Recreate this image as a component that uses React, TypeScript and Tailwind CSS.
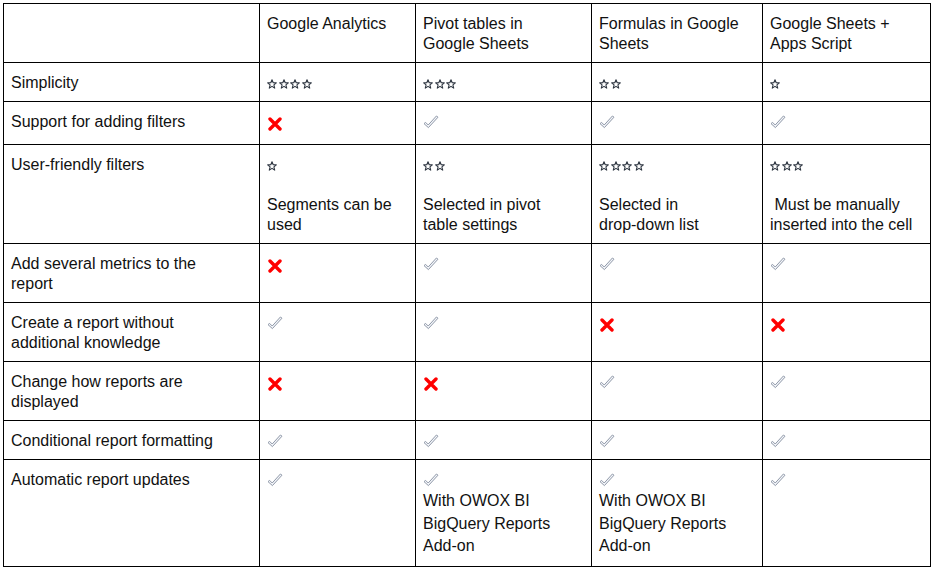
import type { ReactNode } from "react";

function Star() {
    return (
        <svg width="10" height="10" viewBox="0 0 10 10" className="mr-[1.7px] inline-block align-[-1px]">
            <path
                d="M5 0.8 L6.2 3.7 L9.3 3.9 L6.9 5.9 L7.7 9.1 L5 7.4 L2.3 9.1 L3.1 5.9 L0.7 3.9 L3.8 3.7 Z"
                fill="#fff"
                stroke="#2d3540"
                strokeWidth="1.1"
                strokeLinejoin="round"
            />
        </svg>
    );
}

function Stars({ n }: { n: number }) {
    return (
        <span className="leading-[20px]">
            {Array.from({ length: n }, (_, i) => (
                <Star key={i} />
            ))}
        </span>
    );
}

function Check() {
    return (
        <svg width="16" height="14" viewBox="0 0 16 14" className="inline-block align-[-2px]">
            <path
                d="M1 8.6 L2.6 7.4 L5.2 10 L13.4 1 L15 2.2 L5.4 12.6 Z"
                fill="#f4f6fa"
                stroke="#8f98a8"
                strokeWidth="1"
                strokeLinejoin="round"
            />
        </svg>
    );
}

function Cross() {
    return (
        <span className="inline-block leading-[24px]">
            <svg width="16" height="14" viewBox="0 0 16 14" className="inline-block align-[-2px]">
                <path d="M3 2 L13 12 M13 2 L3 12" stroke="#ff0000" strokeWidth="3.4" strokeLinecap="round" />
            </svg>
        </span>
    );
}

type Cell = ReactNode;

const header = ["", "Google Analytics", "Pivot tables in Google Sheets", "Formulas in Google Sheets", "Google Sheets + Apps Script"];

const addOn = (
    <>
        <div className="leading-[20px]">
            <Check />
        </div>
        <div className="leading-[22.5px]">
            With OWOX BI BigQuery Reports <span className="whitespace-nowrap">Add-on</span>
        </div>
    </>
);

const rows: Cell[][] = [
    ["Simplicity", <Stars n={4} />, <Stars n={3} />, <Stars n={2} />, <Stars n={1} />],
    ["Support for adding filters", <Cross />, <Check />, <Check />, <Check />],
    [
        "User-friendly filters",
        <>
            <Stars n={1} />
            <div className="h-5" />
            <div>Segments can be used</div>
        </>,
        <>
            <Stars n={2} />
            <div className="h-5" />
            <div>Selected in pivot table settings</div>
        </>,
        <>
            <Stars n={4} />
            <div className="h-5" />
            <div>
                Selected in <span className="whitespace-nowrap">drop-down</span> list
            </div>
        </>,
        <>
            <Stars n={3} />
            <div className="h-5" />
            <div className="whitespace-pre-wrap">{" Must be manually inserted into the cell"}</div>
        </>,
    ],
    ["Add several metrics to the report", <Cross />, <Check />, <Check />, <Check />],
    ["Create a report without additional knowledge", <Check />, <Check />, <Cross />, <Cross />],
    ["Change how reports are displayed", <Cross />, <Cross />, <Check />, <Check />],
    ["Conditional report formatting", <Check />, <Check />, <Check />, <Check />],
    ["Automatic report updates", <Check />, addOn, addOn, <Check />],
];

const widths = ["w-[256px]", "w-[156px]", "w-[176px]", "w-[171px]", "w-[168px]"];
const cellPad = [
    "pl-[7px] pr-[21px]",
    "pl-[7px] pr-[21px]",
    "pl-[7px] pr-[21px]",
    "pl-[7px] pr-[21px]",
    "pl-[7px] pr-[8px]",
];

export default function App() {
    return (
        <div className="h-[570px] w-[933px] bg-white pl-[3px] pt-[3px] text-[16px] leading-[20px] text-[#111] [font-family:'Liberation_Sans',Arial,sans-serif]">
            <table className="w-[927px] table-fixed border-collapse">
                <colgroup>
                    {widths.map((w) => (
                        <col key={w} className={w} />
                    ))}
                </colgroup>
                <tbody>
                    <tr>
                        {header.map((h, i) => (
                            <td key={i} className={`border border-black pb-[8px] pt-[10px] align-top ${cellPad[i]}`}>
                                {h}
                            </td>
                        ))}
                    </tr>
                    {rows.map((row, r) => (
                        <tr key={r}>
                            {row.map((c, i) => (
                                <td key={i} className={`border border-black pb-[8px] pt-[10px] align-top ${cellPad[i]}`}>
                                    {c}
                                </td>
                            ))}
                        </tr>
                    ))}
                </tbody>
            </table>
        </div>
    );
}
